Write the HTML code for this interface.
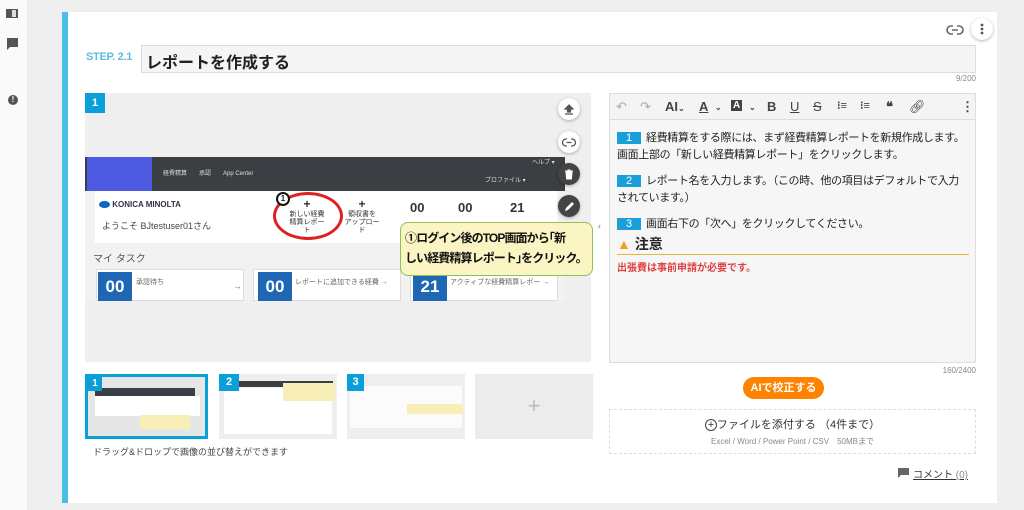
<!DOCTYPE html>
<html><head><meta charset="utf-8"><style>
*{box-sizing:border-box;margin:0;padding:0}
body{width:1024px;height:510px;background:#efefef;font-family:"Liberation Sans","Noto Sans CJK JP",sans-serif;position:relative;overflow:hidden;color:#222}
.a{position:absolute}
.side{left:0;top:0;width:27px;height:510px;background:#fafafa}
.card{left:62px;top:12px;width:935px;height:491px;background:#fff;border-left:6px solid #4cbde9}
.circ{width:22px;height:22px;border-radius:50%;background:#fff;box-shadow:0 1px 3px rgba(0,0,0,.3);display:flex;align-items:center;justify-content:center}
.circ.d{background:#444}
.tb span{position:absolute;top:5px;font-size:13px;color:#444;font-weight:bold}
.num{display:inline-block;background:#1a9fd8;color:#fff;width:24px;text-align:center;font-size:11px;line-height:12px;margin-right:5px;letter-spacing:0}
.p{font-size:11px;line-height:17px;color:#222;letter-spacing:-0.35px}
</style></head><body>
<div class="a side"></div>
<svg class="a" style="left:6px;top:8px" width="14" height="12"><rect x="0" y="1" width="12" height="9" fill="#555"/><rect x="6" y="2" width="4" height="7" fill="#ddd"/></svg>
<svg class="a" style="left:6px;top:37px" width="14" height="14"><path d="M1 1h11v9H4l-3 3z" fill="#555"/></svg>
<div class="a" style="left:8px;top:95px;width:10px;height:10px;border-radius:50%;background:#555;color:#fff;font-size:8px;text-align:center;line-height:10px;font-weight:bold">!</div>
<div class="a card"></div>
<svg class="a" style="left:946px;top:24px" width="18" height="12"><path d="M7 2H5a4 4 0 000 8h2M11 2h2a4 4 0 010 8h-2M6 6h6" stroke="#666" stroke-width="1.6" fill="none"/></svg>
<div class="a circ" style="left:971px;top:18px"><svg width="4" height="12"><circle cx="2" cy="2" r="1.4" fill="#555"/><circle cx="2" cy="6" r="1.4" fill="#555"/><circle cx="2" cy="10" r="1.4" fill="#555"/></svg></div>
<div class="a" style="left:86px;top:51px;font-size:11px;font-weight:bold;color:#5bbbe4;letter-spacing:-0.3px">STEP. 2.1</div>
<div class="a" style="left:141px;top:45px;width:835px;height:28px;background:#f5f5f5;border:1px solid #ddd;font-size:16px;font-weight:bold;padding:3px 4px">レポートを作成する</div>
<div class="a" style="right:48px;top:74px;font-size:8px;color:#888">9/200</div>
<div class="a" style="left:85px;top:93px;width:506px;height:269px;background:#efefef"></div>
<div class="a" style="left:85px;top:93px;width:20px;height:20px;background:#0a9fd8;color:#fff;font-size:11px;font-weight:bold;text-align:center;line-height:20px">1</div>
<div class="a" style="left:85px;top:157px;width:480px;height:143px;background:#f2f2f2"></div>
<div class="a" style="left:85px;top:157px;width:480px;height:34px;background:#3b3e43"></div>
<div class="a" style="left:87px;top:157px;width:65px;height:34px;background:#4c5ae2"></div>
<div class="a" style="left:163px;top:168px;font-size:6px;color:#ddd">経費精算　　承認　　App Center</div>
<div class="a" style="left:532px;top:157px;font-size:6px;color:#ddd">ヘルプ ▾</div>
<div class="a" style="left:485px;top:175px;font-size:6px;color:#ddd">プロファイル ▾</div>
<div class="a" style="left:95px;top:191px;width:462px;height:52px;background:#fff"></div>
<div class="a" style="left:99px;top:200px;font-size:8px;font-weight:bold;color:#334"><span style="display:inline-block;width:11px;height:7px;border-radius:50%;background:#1065c0;vertical-align:middle"></span> KONICA MINOLTA</div>
<div class="a" style="left:102px;top:219px;font-size:9px;color:#444">ようこそ BJtestuser01さん</div>
<div class="a" style="left:272px;top:200px;font-size:7px;color:#333;text-align:center;width:70px;line-height:8px"><b style="font-size:12px">+</b><br>新しい経費<br>精算レポー<br>ト</div>
<div class="a" style="left:342px;top:200px;font-size:7px;color:#333;text-align:center;width:40px;line-height:8px"><b style="font-size:12px">+</b><br>領収書を<br>アップロー<br>ド</div>
<div class="a" style="left:410px;top:200px;font-size:13px;font-weight:bold;color:#333">00</div>
<div class="a" style="left:458px;top:200px;font-size:13px;font-weight:bold;color:#333">00</div>
<div class="a" style="left:510px;top:200px;font-size:13px;font-weight:bold;color:#333">21</div>
<div class="a" style="left:273px;top:192px;width:70px;height:48px;border:3px solid #e02020;border-radius:50%"></div>
<div class="a" style="left:276px;top:192px;width:14px;height:14px;border:2px solid #111;border-radius:50%;background:#fff;font-size:8px;font-weight:bold;text-align:center;line-height:10px">1</div>
<div class="a" style="left:93px;top:250px;font-size:10px;color:#555">マイ タスク</div>
<div class="a" style="left:96px;top:269px;width:148px;height:32px;background:#fff;border:1px solid #ddd"></div>
<div class="a" style="left:98px;top:272px;width:34px;height:29px;background:#1f67b5;color:#fff;font-size:17px;font-weight:bold;text-align:center;line-height:29px">00</div>
<div class="a" style="left:136px;top:277px;font-size:7px;color:#666">承認待ち</div>
<div class="a" style="left:253px;top:269px;width:148px;height:32px;background:#fff;border:1px solid #ddd"></div>
<div class="a" style="left:258px;top:272px;width:34px;height:29px;background:#1f67b5;color:#fff;font-size:17px;font-weight:bold;text-align:center;line-height:29px">00</div>
<div class="a" style="left:295px;top:277px;font-size:7px;color:#666">レポートに追加できる経費 <span style="color:#3a7bc8">→</span></div>
<div class="a" style="left:410px;top:269px;width:148px;height:32px;background:#fff;border:1px solid #ddd"></div>
<div class="a" style="left:413px;top:272px;width:34px;height:29px;background:#1f67b5;color:#fff;font-size:17px;font-weight:bold;text-align:center;line-height:29px">21</div>
<div class="a" style="left:450px;top:277px;font-size:7px;color:#666">アクティブな経費精算レポー <span style="color:#3a7bc8">→</span></div>
<div class="a" style="left:233px;top:281px;font-size:9px;color:#3a7bc8">→</div>
<div class="a" style="left:400px;top:222px;width:193px;height:54px;background:#fbf5c4;border:1px solid #8fbf5a;border-radius:8px;font-size:12px;font-weight:bold;line-height:20px;padding:5px 4px;color:#111;letter-spacing:-0.9px;white-space:nowrap">①ログイン後のTOP画面から｢新<br>しい経費精算レポート｣をクリック。</div>
<div class="a circ" style="left:558px;top:98px"><svg width="10" height="11"><path d="M5 1L1 5h2.5v3h3V5H9zM1 10h8" stroke="#555" fill="#555" stroke-width="1.2"/></svg></div>
<div class="a circ" style="left:558px;top:131px"><svg width="14" height="9"><path d="M5 1H4a3.5 3.5 0 000 7h1M9 1h1a3.5 3.5 0 010 7H9M4.5 4.5h5" stroke="#555" stroke-width="1.3" fill="none"/></svg></div>
<div class="a circ d" style="left:558px;top:163px"><svg width="10" height="11"><path d="M1 2h8M3.5 1h3M2 3h6l-.6 7H2.6z" stroke="#fff" fill="#fff" stroke-width="1"/></svg></div>
<div class="a circ d" style="left:558px;top:195px"><svg width="11" height="11"><path d="M1 10l1-3 6-6 2 2-6 6z" fill="#fff"/></svg></div>
<div class="a" style="left:598px;top:221px;font-size:9px;color:#777">‹</div>
<div class="a" style="left:85px;top:374px;width:123px;height:65px;border:3px solid #0aa0d8;background:#e6e6e6"><div style="position:absolute;left:7px;top:11px;width:100px;height:8px;background:#3b3e43"></div><div style="position:absolute;left:7px;top:19px;width:105px;height:20px;background:#fff"></div><div style="position:absolute;left:52px;top:38px;width:50px;height:14px;background:#f7efb5"></div></div>
<div class="a" style="left:219px;top:374px;width:118px;height:65px;background:#eee"><div style="position:absolute;left:14px;top:7px;width:100px;height:6px;background:#3b3e43"></div><div style="position:absolute;left:5px;top:14px;width:108px;height:46px;background:#fff"></div><div style="position:absolute;left:64px;top:9px;width:52px;height:18px;background:#f7efb5"></div></div>
<div class="a" style="left:347px;top:374px;width:118px;height:65px;background:#eee"><div style="position:absolute;left:3px;top:12px;width:112px;height:42px;background:#fbfbfb"></div><div style="position:absolute;left:60px;top:30px;width:56px;height:10px;background:#f7efb5"></div></div>
<div class="a" style="left:219px;top:374px;width:20px;height:17px;background:#0a9fd8;color:#fff;font-size:11px;font-weight:bold;text-align:center;line-height:17px">2</div>
<div class="a" style="left:347px;top:374px;width:17px;height:17px;background:#0a9fd8;color:#fff;font-size:11px;font-weight:bold;text-align:center;line-height:17px">3</div>
<div class="a" style="left:88px;top:377px;width:14px;height:14px;background:#0a9fd8;color:#fff;font-size:10px;font-weight:bold;text-align:center;line-height:14px">1</div>
<div class="a" style="left:475px;top:374px;width:118px;height:65px;background:#ececec;color:#bbb;font-size:22px;text-align:center;line-height:63px">+</div>
<div class="a" style="left:93px;top:445px;font-size:9px;color:#444">ドラッグ&amp;ドロップで画像の並び替えができます</div>
<div class="a" style="left:609px;top:93px;width:367px;height:270px;background:#f6f6f6;border:1px solid #ddd"></div>
<div class="a tb" style="left:610px;top:94px;width:365px;height:26px;background:#f4f4f4;border-bottom:1px solid #ddd">
<span style="left:6px;color:#aaa;font-weight:normal">↶</span><span style="left:30px;color:#aaa;font-weight:normal">↷</span>
<span style="left:55px">AI<small style="font-size:8px">⌄</small></span><span style="left:89px;text-decoration:underline">A</span><span style="left:105px;font-size:8px;top:9px">⌄</span>
<span style="left:121px;top:6px;background:#444;color:#fff;font-size:10px;padding:0 2px">A</span><span style="left:139px;font-size:8px;top:9px">⌄</span>
<span style="left:157px">B</span><span style="left:180px;text-decoration:underline;font-weight:normal">U</span><span style="left:203px;text-decoration:line-through;font-weight:normal">S</span>
<span style="left:227px;font-size:11px">⁝≡</span><span style="left:250px;font-size:11px">⁝≡</span><span style="left:276px">❝</span><span style="left:299px;font-weight:normal">🔗︎</span><span style="left:351px">⋮</span>
</div>
<div class="a" style="left:617px;top:130px;width:355px">
<div class="p"><span class="num">1</span>経費精算をする際には、まず経費精算レポートを新規作成します。<br>画面上部の「新しい経費精算レポート」をクリックします。</div>
<div class="p" style="margin-top:9px"><span class="num">2</span>レポート名を入力します。（この時、他の項目はデフォルトで入力<br>されています。）</div>
<div class="p" style="margin-top:9px"><span class="num">3</span>画面右下の「次へ」をクリックしてください。</div>
<div style="font-size:14px;font-weight:bold;margin-top:2px;border-bottom:1px solid #e8b830;width:352px;line-height:19px"><span style="color:#f0a020">▲</span> 注意</div>
<div style="font-size:10px;font-weight:bold;color:#e04040;margin-top:4px">出張費は事前申請が必要です。</div>
</div>
<div class="a" style="right:48px;top:366px;font-size:8px;color:#888">160/2400</div>
<div class="a" style="left:743px;top:377px;width:81px;height:22px;background:#ff8200;border-radius:11px;color:#fff;font-size:11px;font-weight:bold;text-align:center;line-height:22px">AIで校正する</div>
<div class="a" style="left:609px;top:409px;width:367px;height:45px;border:1px dashed #ddd;text-align:center">
<div style="font-size:11px;color:#333;margin-top:6px"><span style="display:inline-block;width:12px;height:12px;border:1px solid #444;border-radius:50%;line-height:10px;font-size:11px">+</span>ファイルを添付する （4件まで）</div>
<div style="font-size:8px;color:#888;margin-top:4px">Excel / Word / Power Point / CSV　50MBまで</div></div>
<svg class="a" style="left:898px;top:468px" width="11" height="10"><path d="M0 0h11v7H3l-3 3z" fill="#666"/></svg>
<div class="a" style="left:913px;top:466px;font-size:10px;color:#333;text-decoration:underline">コメント <span style="color:#888">(0)</span></div>
</body></html>
